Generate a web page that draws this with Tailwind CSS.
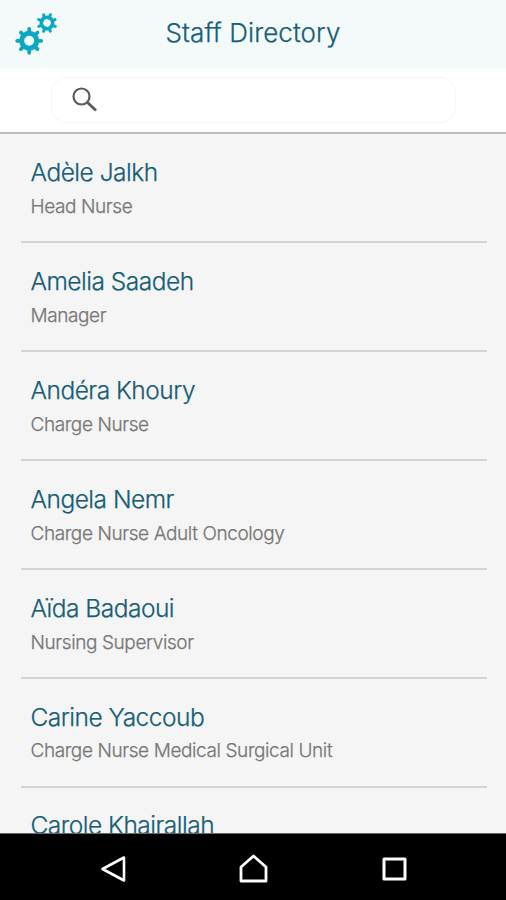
<!DOCTYPE html>
<html lang="en">
<head>
<meta charset="utf-8">
<title>Staff Directory</title>
<script src="https://cdn.jsdelivr.net/npm/@tailwindcss/browser@4"></script>
</head>
<body class="w-[506px] h-[900px] overflow-hidden flex flex-col bg-[#f5f5f5] font-['Inter',sans-serif] font-light [-webkit-text-stroke:0.25px]">
<header class="h-[68px] shrink-0 bg-[#f4f9fa] grid grid-cols-[66px_1fr_66px] items-start">
  <svg class="w-[66px] h-[68px]" viewBox="0 0 66 68" fill="none" stroke="#0ba8c4">
    <g transform="translate(29.2 40.8)"><path d="M0-12V-8M0 8V12M-12 0H-8M8 0H12M-8.3-8.3-6-6M8.3 8.3 6 6M-8.3 8.3-6 6M8.3-8.3 6-6" stroke-width="3.8" stroke-linecap="round"/><circle r="7.5" stroke-width="5"/></g>
    <g transform="translate(47 23) rotate(22.5) scale(.75)"><path d="M0-12V-8M0 8V12M-12 0H-8M8 0H12M-8.3-8.3-6-6M8.3 8.3 6 6M-8.3 8.3-6 6M8.3-8.3 6-6" stroke-width="4" stroke-linecap="round"/><circle r="7.5" stroke-width="5"/></g>
  </svg>
  <h1 class="text-center text-[26px] leading-8 pt-[17px] tracking-[0.1px] text-[#165e77] whitespace-nowrap">Staff Directory</h1>
</header>
<div class="h-[66px] shrink-0 bg-white border-b-2 border-[#bcbcbc] pt-[9px] pl-[51px]">
  <div class="w-[405px] h-[46px] rounded-[15px] border border-[#f5f5f5] flex items-center pl-[19px]">
    <svg class="w-7 h-7" viewBox="0 0 28 28" fill="none" stroke="#5b5b5b"><circle cx="10.5" cy="10.5" r="8" stroke-width="2.2"/><path d="M16.5 16.5 25 24.5" stroke-width="2.8"/></svg>
  </div>
</div>
<main class="flex-1 min-h-0 overflow-hidden pl-[21px] pr-[19px] text-[#165e77] text-[24.5px] tracking-[-0.5px] whitespace-nowrap">
  <section class="h-[109px] border-b-2 border-[#d4d4d4] pl-[9.5px] pt-[22px]"><h2 class="leading-8">Adèle Jalkh</h2><p class="text-[19px] leading-6 mt-[7px] tracking-[-0.4px] text-[#777]">Head Nurse</p></section>
  <section class="h-[109px] border-b-2 border-[#d4d4d4] pl-[9.5px] pt-[22px]"><h2 class="leading-8">Amelia Saadeh</h2><p class="text-[19px] leading-6 mt-[7px] tracking-[-0.4px] text-[#777]">Manager</p></section>
  <section class="h-[109px] border-b-2 border-[#d4d4d4] pl-[9.5px] pt-[22px]"><h2 class="leading-8">Andéra Khoury</h2><p class="text-[19px] leading-6 mt-[7px] tracking-[-0.4px] text-[#777]">Charge Nurse</p></section>
  <section class="h-[109px] border-b-2 border-[#d4d4d4] pl-[9.5px] pt-[22px]"><h2 class="leading-8">Angela Nemr</h2><p class="text-[19px] leading-6 mt-[7px] tracking-[-0.4px] text-[#777]">Charge Nurse Adult Oncology</p></section>
  <section class="h-[109px] border-b-2 border-[#d4d4d4] pl-[9.5px] pt-[22px]"><h2 class="leading-8">Aïda Badaoui</h2><p class="text-[19px] leading-6 mt-[7px] tracking-[-0.4px] text-[#777]">Nursing Supervisor</p></section>
  <section class="h-[109px] border-b-2 border-[#d4d4d4] pl-[9.5px] pt-[22px]"><h2 class="leading-8">Carine Yaccoub</h2><p class="text-[19px] leading-6 mt-[6px] tracking-[-0.4px] text-[#777]">Charge Nurse Medical Surgical Unit</p></section>
  <section class="pl-[9.5px] pt-[21px]"><h2 class="leading-8">Carole Khairallah</h2></section>
</main>
<nav class="h-[67px] shrink-0 bg-black border-t border-[#666] flex justify-between pl-[98px] pr-[96px] pt-[19px]">
  <svg class="w-8 h-8" viewBox="0 0 32 32" fill="none" stroke="#fff" stroke-width="2.6" stroke-linejoin="round"><path d="M26 4.5V27.5L4.5 16Z"/></svg>
  <svg class="w-8 h-8" viewBox="0 0 32 32" fill="none" stroke="#fff" stroke-width="2.8" stroke-linejoin="round"><path d="M3 28V14L15.5 3 28 14V28Z"/></svg>
  <svg class="w-8 h-8" viewBox="0 0 32 32" fill="none" stroke="#fff" stroke-width="3" stroke-linejoin="round"><path d="M6 6H27V26H6Z"/></svg>
</nav>
</body>
</html>
